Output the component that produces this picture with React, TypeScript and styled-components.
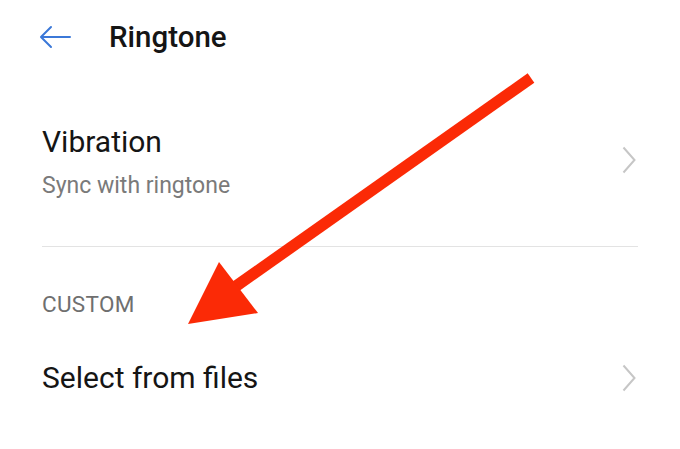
import * as React from 'react';
import styled, { createGlobalStyle } from 'styled-components';

const GlobalStyle = createGlobalStyle`
	html, body {
		margin: 0;
		padding: 0;
		background: #ffffff;
	}
	body {
		font-family: Roboto, 'Noto Sans', 'Liberation Sans', sans-serif;
		color: #111111;
	}
`;

const Screen = styled.div`
	position: relative;
	width: 680px;
	height: 449px;
	overflow: hidden;
	background: #ffffff;
`;

const Header = styled.div`
	display: flex;
	align-items: center;
	height: 74px;
	padding-left: 39px;
	gap: 37px;
`;

const BackButton = styled.div`
	display: flex;
	align-items: center;
	width: 33px;
	height: 24px;
`;

const Title = styled.div`
	font-size: 29.5px;
	font-weight: 500;
	color: #151515;
`;

const List = styled.div`
	padding: 0 42px;
`;

const Row = styled.div<{ height: number }>`
	display: flex;
	align-items: center;
	justify-content: space-between;
	height: ${(p) => p.height}px;
`;

const RowText = styled.div`
	display: flex;
	flex-direction: column;
	gap: 13px;
	padding-top: 3px;
`;

const RowTitle = styled.div`
	font-size: 30px;
	color: #151515;
	line-height: 34px;
`;

const RowSub = styled.div`
	font-size: 23px;
	color: #7a7a7a;
	line-height: 27px;
`;

const Divider = styled.div`
	height: 1px;
	background: #e3e3e3;
`;

const SectionLabel = styled.div`
	font-size: 22.5px;
	letter-spacing: 0.3px;
	color: #6f6f6f;
	padding-top: 44px;
	height: 40px;
`;

const ChevronWrap = styled.div`
	display: flex;
	margin-right: 2px;
`;

const Overlay = styled.svg`
	position: absolute;
	left: 0;
	top: 0;
	pointer-events: none;
`;

const Chevron: React.FC = () => (
	<ChevronWrap>
		<svg width='14' height='28' viewBox='0 0 14 28'>
			<polyline
				points='1.5,1.5 12.5,14 1.5,26.5'
				fill='none'
				stroke='#c6c6c6'
				strokeWidth='2'
			/>
		</svg>
	</ChevronWrap>
);

const App: React.FC = () => {
	return (
		<Screen>
			<GlobalStyle />
			<Header>
				<BackButton>
					<svg width='32' height='24' viewBox='0 0 32 24'>
						<path
							d='M31 12H3M12 2L2 12l10 10'
							fill='none'
							stroke='#3b78d8'
							strokeWidth='2'
							strokeLinecap='round'
							strokeLinejoin='round'
						/>
					</svg>
				</BackButton>
				<Title>Ringtone</Title>
			</Header>
			<List>
				<Row height={172}>
					<RowText>
						<RowTitle>Vibration</RowTitle>
						<RowSub>Sync with ringtone</RowSub>
					</RowText>
					<Chevron />
				</Row>
				<Divider />
				<SectionLabel>CUSTOM</SectionLabel>
				<Row height={93}>
					<RowTitle>Select from files</RowTitle>
					<Chevron />
				</Row>
			</List>
			<Overlay width='680' height='449' viewBox='0 0 680 449'>
				<line
					x1='531'
					y1='78'
					x2='232'
					y2='289'
					stroke='#fb2a06'
					strokeWidth='11.5'
				/>
				<polygon points='188,324 219,262 258,313' fill='#fb2a06' />
			</Overlay>
		</Screen>
	);
};

export default App;
